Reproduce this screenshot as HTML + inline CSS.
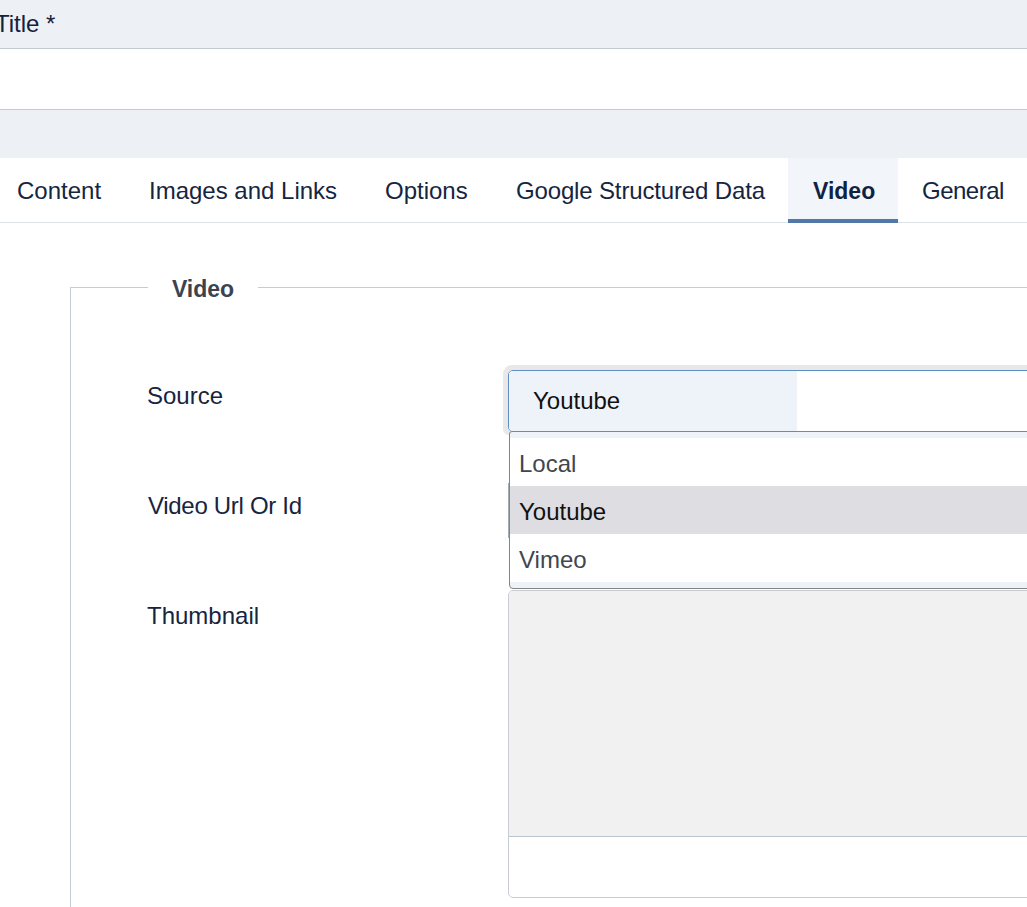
<!DOCTYPE html>
<html><head><meta charset="utf-8">
<style>
*{margin:0;padding:0;box-sizing:border-box}
html,body{width:1027px;height:907px;overflow:hidden;background:#fff;font-family:"Liberation Sans",sans-serif;}
.abs{position:absolute}
body{-webkit-font-smoothing:antialiased}
#top{left:0;top:0;width:1027px;height:49px;background:#edf1f5;border-bottom:1px solid #c3cad2}
#title{left:-5px;top:9px;font-size:24px;line-height:30px;color:#13223d;white-space:nowrap}
#white1{left:0;top:49px;width:1027px;height:61px;background:#fff;border-bottom:1px solid #c3cad2}
#band{left:0;top:110px;width:1027px;height:48px;background:#edf1f5}
#tabs{left:0;top:158px;width:1027px;height:65px;background:#fff;border-bottom:1px solid #dde2e7}
.tab{position:absolute;top:0;height:64px;font-size:24px;line-height:64px;color:#16253f;white-space:nowrap}
#activetab{left:788px;top:158px;width:110px;height:65px;background:#f2f5f9;border-bottom:4px solid #5178a9}
#fs{left:70px;top:287px;width:1000px;height:700px;border:1px solid #c4ccd4}
#legend{left:148px;top:274px;width:110px;height:30px;background:#fff;font-size:23px;font-weight:bold;color:#3b4350;line-height:30px;text-align:center}
.lbl{position:absolute;left:147px;font-size:24px;color:#16253f;white-space:nowrap;line-height:30px}
#ring{left:503px;top:365px;width:600px;height:70px;border-radius:9px 9px 6px 6px;background:#e8e8e8}
#sel{left:508px;top:370px;width:600px;height:62px;border:1px solid #5e8fc4;border-radius:5px;background:#fff;overflow:hidden}
#selhl{left:0;top:0;width:288px;height:62px;background:#eef3f9}
#seltxt{left:24px;top:15px;font-size:24px;line-height:30px;color:#111}
#dd{left:509px;top:431px;width:600px;height:158px;border:1px solid #858585;border-radius:3px 0 4px 4px;background:#eef3f9;overflow:hidden}
.opt{position:absolute;left:0;width:600px;height:48px;background:#fff;font-size:24px;line-height:52px;padding-left:9px;color:#3f4650;white-space:nowrap}
#thumb{left:508px;top:590px;width:600px;height:308px;border:1px solid #c9cdd2;border-radius:5px;background:#fff;overflow:hidden}
#thumbg{left:0;top:0;width:600px;height:246px;background:#f1f1f1;border-bottom:1px solid #b9c4cf}
</style></head><body>
<div id="top" class="abs"></div>
<div id="title" class="abs">Title *</div>
<div id="white1" class="abs"></div>
<div id="band" class="abs"></div>
<div id="tabs" class="abs">
</div>
<div id="activetab" class="abs"></div>
<div class="abs" style="left:0;top:159px;width:1027px;height:64px">
<span class="tab" style="left:17px">Content</span>
<span class="tab" style="left:149px">Images and Links</span>
<span class="tab" style="left:385px">Options</span>
<span class="tab" style="left:516px;letter-spacing:-0.15px">Google Structured Data</span>
<span class="tab" style="left:813px;font-size:23px;font-weight:bold;color:#0f2341">Video</span>
<span class="tab" style="left:922px;letter-spacing:-0.5px">General</span>
</div>
<div id="fs" class="abs"></div>
<div id="legend" class="abs">Video</div>
<div class="lbl" style="top:381px">Source</div>
<div class="lbl" style="top:491px;left:148px;letter-spacing:-0.3px">Video Url Or Id</div>
<div class="lbl" style="top:601px">Thumbnail</div>
<div id="ring" class="abs"></div>
<div id="sel" class="abs"><div id="selhl" class="abs"></div><div id="seltxt" class="abs">Youtube</div></div>
<div class="abs" style="left:508px;top:483px;width:1px;height:55px;background:#a4abb3"></div>
<div id="dd" class="abs">
<div class="opt" style="top:6px">Local</div>
<div class="opt" style="top:54px;background:#dedde2;color:#111">Youtube</div>
<div class="opt" style="top:102px">Vimeo</div>
</div>
<div id="thumb" class="abs"><div id="thumbg" class="abs"></div></div>
</body></html>
